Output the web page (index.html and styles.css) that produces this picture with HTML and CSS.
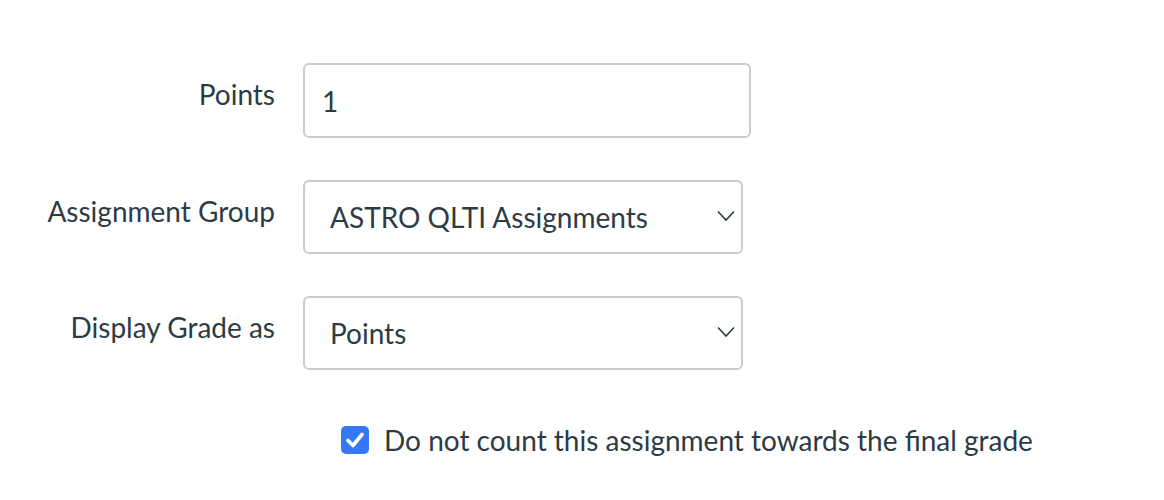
FILE: index.html
```html
<!DOCTYPE html>
<html>
<head>
<meta charset="utf-8">
<link rel="stylesheet" href="styles.css">
</head>
<body>
<div class="form">
  <div class="row">
    <label class="label">Points</label>
    <div class="field input-field"><span class="value">1</span></div>
  </div>
  <div class="row">
    <label class="label">Assignment Group</label>
    <div class="field select-field">
      <span class="value">ASTRO QLTI Assignments</span>
      <svg class="chev" width="18" height="12" viewBox="0 0 18 12"><path d="M1 1.5 L9 10 L17 1.5" fill="none" stroke="#2d3b45" stroke-width="1.6"/></svg>
    </div>
  </div>
  <div class="row">
    <label class="label">Display Grade as</label>
    <div class="field select-field">
      <span class="value">Points</span>
      <svg class="chev" width="18" height="12" viewBox="0 0 18 12"><path d="M1 1.5 L9 10 L17 1.5" fill="none" stroke="#2d3b45" stroke-width="1.6"/></svg>
    </div>
  </div>
  <div class="check-row">
    <span class="checkbox">
      <svg width="28" height="28" viewBox="0 0 28 28"><rect x="0" y="0" width="28" height="28" rx="5" fill="#3478f6"/><path d="M7 14.5 L12 19.5 L21 8.5" fill="none" stroke="#fff" stroke-width="3.6" stroke-linecap="round" stroke-linejoin="round"/></svg>
    </span>
    <span class="check-text">Do not count this assignment towards the final grade</span>
  </div>
</div>
</body>
</html>
```
FILE: styles.css
```css
html, body {
  margin: 0;
  padding: 0;
  background: #fff;
}
body {
  font-family: Lato, "Liberation Sans", sans-serif;
  color: #2d3b45;
  font-size: 28px;
}
.form {
  padding-top: 63px;
  display: flex;
  flex-direction: column;
  gap: 42px;
}
.row {
  display: flex;
  align-items: flex-start;
}
.label {
  width: 275px;
  text-align: right;
  padding-top: 14px;
  line-height: 34px;
  flex-shrink: 0;
}
.field {
  margin-left: 28px;
  box-sizing: border-box;
  height: 74px;
  border: 2px solid #c9cdd1;
  border-radius: 6px;
  display: flex;
  align-items: center;
  background: #fff;
}
.input-field {
  width: 448px;
  height: 75px;
  padding-left: 17px;
}
.select-field {
  width: 440px;
  padding-left: 25px;
  padding-right: 6px;
  justify-content: space-between;
}
.value {
  line-height: 34px;
}
.chev {
  display: block;
  margin-top: -2px;
}
.check-row {
  display: flex;
  align-items: center;
  margin-top: 11px;
  padding-left: 341px;
}
.checkbox {
  display: block;
  width: 28px;
  height: 28px;
}
.checkbox svg {
  display: block;
}
.check-text {
  margin-left: 15px;
  line-height: 34px;
}
```
